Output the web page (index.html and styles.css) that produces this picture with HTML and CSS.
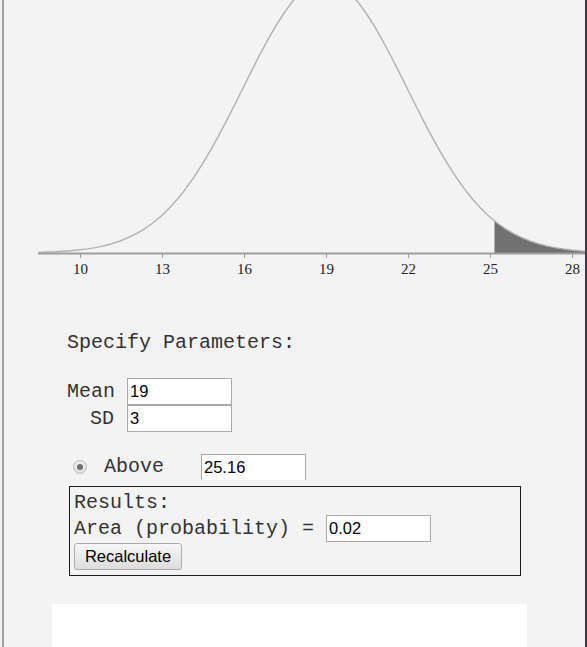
FILE: index.html
```html
<!DOCTYPE html>
<html>
<head>
<meta charset="utf-8">
<title>Normal Distribution</title>
<link rel="stylesheet" href="styles.css">
</head>
<body>
<div class="page">
  <svg class="chart" width="581" height="331" viewBox="4 0 581 331" xmlns="http://www.w3.org/2000/svg">
    <path class="shade" d="M494.5,220.9 L497.2,223.0 L505.4,228.8 L513.6,233.7 L521.8,237.7 L530,241.0 L538.2,243.7 L546.4,245.9 L554.6,247.6 L562.8,248.9 L571,250.0 L579.2,250.8 L587.4,251.4 L595.6,251.8 L595.6,253.5 L494.5,253.5 Z"/>
    <path class="curve" d="M38,252.4 L54.4,251.8 L70.8,250.8 L87.2,248.9 L95.4,247.6 L103.6,245.9 L111.8,243.7 L120,241.0 L128.2,237.7 L136.4,233.7 L144.6,228.8 L152.8,223.0 L161,216.2 L169.2,208.3 L177.4,199.2 L185.6,188.9 L193.8,177.4 L202,164.7 L210.2,150.9 L218.4,136.2 L226.6,120.6 L234.8,104.5 L243,88.0 L251.2,71.6 L259.4,55.5 L267.6,40.1 L275.8,25.8 L284,13.0 L292.2,1.9 L300.4,-7.0 L308.6,-13.6 L316.8,-17.6 L325,-19 L333.2,-17.6 L341.4,-13.6 L349.6,-7.0 L357.8,1.9 L366,13.0 L374.2,25.8 L382.4,40.1 L390.6,55.5 L398.8,71.6 L407,88.0 L415.2,104.5 L423.4,120.6 L431.6,136.2 L439.8,150.9 L448,164.7 L456.2,177.4 L464.4,188.9 L472.6,199.2 L480.8,208.3 L489,216.2 L497.2,223.0 L505.4,228.8 L513.6,233.7 L521.8,237.7 L530,241.0 L538.2,243.7 L546.4,245.9 L554.6,247.6 L562.8,248.9 L571,250.0 L579.2,250.8 L587.4,251.4 L595.6,251.8"/>
    <line class="axis" x1="38" y1="253.5" x2="600" y2="253.5"/>
    <g class="ticks">
      <line x1="80.5" y1="253" x2="80.5" y2="258"/>
      <line x1="162.5" y1="253" x2="162.5" y2="258"/>
      <line x1="244.5" y1="253" x2="244.5" y2="258"/>
      <line x1="326.5" y1="253" x2="326.5" y2="258"/>
      <line x1="408.5" y1="253" x2="408.5" y2="258"/>
      <line x1="490.5" y1="253" x2="490.5" y2="258"/>
      <line x1="572.5" y1="253" x2="572.5" y2="258"/>
    </g>
    <g class="labels">
      <text x="80.5" y="274">10</text>
      <text x="162.5" y="274">13</text>
      <text x="244.5" y="274">16</text>
      <text x="326.5" y="274">19</text>
      <text x="408.5" y="274">22</text>
      <text x="490.5" y="274">25</text>
      <text x="572.5" y="274">28</text>
    </g>
  </svg>

  <div class="params">
    <div class="heading">Specify Parameters:</div>
    <div class="grid">
      <label class="lbl">Mean</label>
      <input class="field" type="text" value="19">
      <label class="lbl">SD</label>
      <input class="field" type="text" value="3">
    </div>
    <div class="above-row">
      <span class="radio"><span class="dot"></span></span>
      <span class="above-label">Above</span>
      <input class="field above-field" type="text" value="25.16">
    </div>
    <div class="results">
      <div class="res-title">Results:</div>
      <div class="res-row">
        <span class="res-label">Area (probability) =&nbsp;</span>
        <input class="field" type="text" value="0.02">
      </div>
      <button class="btn" type="button">Recalculate</button>
    </div>
  </div>

  <div class="whitebox"></div>
</div>
</body>
</html>
```

FILE: styles.css
```css
html, body {
  margin: 0;
  padding: 0;
  background: #f3f3f3;
}

.page {
  margin-left: 2px;
  width: 581px;
  height: 647px;
  overflow: hidden;
  border-left: 2px solid #a0a0a0;
  border-right: 2px solid #44354e;
  background: #f3f3f3;
  font-family: "Liberation Mono", "Courier New", monospace;
  font-size: 20px;
  color: #333;
}

.chart {
  display: block;
}

.curve {
  fill: none;
  stroke: #b0b0b0;
  stroke-width: 1.4;
  stroke-linejoin: round;
}

.shade {
  fill: #717171;
  stroke: none;
}

.axis {
  stroke: #9d9d9d;
  stroke-width: 2;
}

.ticks line {
  stroke: #9d9d9d;
  stroke-width: 1;
}

.labels text {
  font-family: "Liberation Serif", "Times New Roman", serif;
  font-size: 15px;
  fill: #222;
  text-anchor: middle;
}

.params {
  padding-left: 63px;
}

.heading {
  line-height: 24px;
  height: 24px;
}

.grid {
  margin-top: 23px;
  display: grid;
  grid-template-columns: 47px 105px;
  grid-auto-rows: 27px;
  column-gap: 13px;
  align-items: center;
}

.lbl {
  text-align: right;
  line-height: 24px;
}

.field {
  box-sizing: border-box;
  width: 105px;
  height: 27px;
  margin: 0;
  padding: 0 2px;
  border: 1px solid #a9a9a9;
  background: #fff;
  font-family: "Liberation Sans", Arial, sans-serif;
  font-size: 16.5px;
  color: #000;
  outline: none;
}

.above-row {
  margin-top: 22px;
  display: flex;
  align-items: center;
  height: 26px;
}

.radio {
  box-sizing: border-box;
  width: 14px;
  height: 14px;
  margin-left: 6px;
  border-radius: 50%;
  border: 1px solid #bdbdbd;
  background: radial-gradient(circle at 50% 40%, #f6f6f6, #d8d8d8);
  display: flex;
  align-items: center;
  justify-content: center;
}

.dot {
  width: 6px;
  height: 6px;
  border-radius: 50%;
  background: #6f6f6f;
}

.above-label {
  margin-left: 17px;
  line-height: 24px;
}

.above-field {
  margin-left: 37px;
  height: 26px;
  border-bottom: 0;
  align-self: flex-start;
}

.results {
  margin-top: 6px;
  margin-left: 2px;
  width: 452px;
  box-sizing: border-box;
  border: 1px solid #1c1c1c;
  padding: 4px 4px 5px 4px;
}

.res-title {
  line-height: 24px;
  height: 24px;
}

.res-row {
  display: flex;
  align-items: center;
  height: 27px;
  white-space: pre;
}

.res-label {
  line-height: 24px;
}

.btn {
  display: block;
  margin-top: 1px;
  box-sizing: border-box;
  width: 108px;
  height: 27px;
  padding: 0;
  border: 1px solid #acacac;
  border-radius: 3px;
  background: linear-gradient(#f7f7f7, #dcdcdc);
  font-family: "Liberation Sans", Arial, sans-serif;
  font-size: 16.5px;
  color: #000;
}

.whitebox {
  margin-top: 28px;
  margin-left: 48px;
  width: 475px;
  height: 60px;
  background: #fff;
}
```
